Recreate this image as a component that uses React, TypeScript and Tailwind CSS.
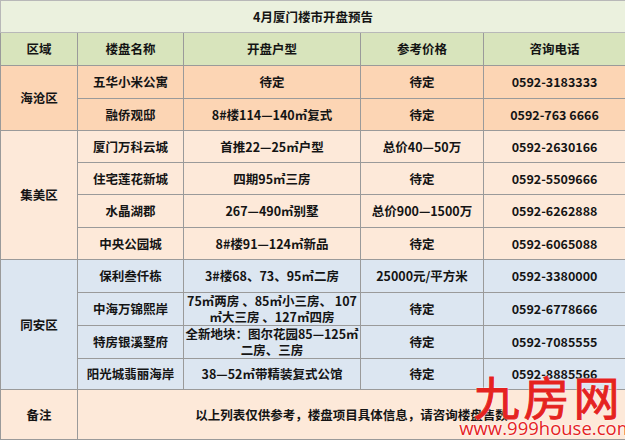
import React from "react";

type Row = {
  name: string;
  type: React.ReactNode;
  price: string;
  phone: string;
  h: string;
};

type Group = {
  area: string;
  bg: string;
  rows: Row[];
};

const groups: Group[] = [
  {
    area: "海沧区",
    bg: "bg-[#fcd5b4]",
    rows: [
      { name: "五华小米公寓", type: "待定", price: "待定", phone: "0592-3183333", h: "h-[33px]" },
      { name: "融侨观邸", type: "8#楼114—140㎡复式", price: "待定", phone: "0592-763 6666", h: "h-[32px]" },
    ],
  },
  {
    area: "集美区",
    bg: "bg-[#fde9d9]",
    rows: [
      { name: "厦门万科云城", type: "首推22—25㎡户型", price: "总价40—50万", phone: "0592-2630166", h: "h-[32px]" },
      { name: "住宅莲花新城", type: "四期95㎡三房", price: "待定", phone: "0592-5509666", h: "h-[32px]" },
      { name: "水晶湖郡", type: "267—490㎡别墅", price: "总价900—1500万", phone: "0592-6262888", h: "h-[33px]" },
      { name: "中央公园城", type: "8#楼91—124㎡新品", price: "待定", phone: "0592-6065088", h: "h-[32px]" },
    ],
  },
  {
    area: "同安区",
    bg: "bg-[#dce6f1]",
    rows: [
      { name: "保利叁仟栋", type: "3#楼68、73、95㎡二房", price: "25000元/平方米", phone: "0592-3380000", h: "h-[33px]" },
      {
        name: "中海万锦熙岸",
        type: (
          <>
            75㎡两房 、85㎡小三房、 107
            <br />
            ㎡大三房 、127㎡四房
          </>
        ),
        price: "待定",
        phone: "0592-6778666",
        h: "h-[32px]",
      },
      {
        name: "特房银溪墅府",
        type: (
          <>
            全新地块：图尔花园85—125㎡
            <br />
            二房、三房
          </>
        ),
        price: "待定",
        phone: "0592-7085555",
        h: "h-[33px]",
      },
      { name: "阳光城翡丽海岸", type: "38—52㎡带精装复式公馆", price: "待定", phone: "0592-8885566", h: "h-[31px]" },
    ],
  },
];

const cell = "border border-[#9a9a9a] text-center align-middle p-0";

export default function App() {
  return (
    <div
      className="relative w-[625px] h-[441px] overflow-hidden bg-white text-[#141414] font-bold text-[12.5px]"
      style={{ fontFamily: '"Noto Sans CJK SC", "Noto Sans", sans-serif' }}
    >
      <table className="w-[625px] table-fixed border-collapse leading-[16px]">
        <colgroup>
          <col className="w-[77px]" />
          <col className="w-[106px]" />
          <col className="w-[177px]" />
          <col className="w-[123px]" />
          <col className="w-[142px]" />
        </colgroup>
        <tbody>
          <tr className="h-[32px] bg-[#ebf1de]">
            <td colSpan={5} className={cell + " border-[#b8b8b8]"}>
              4月厦门楼市开盘预告
            </td>
          </tr>
          <tr className="h-[33px] bg-[#d8e4bc]">
            <td className={cell}>区域</td>
            <td className={cell}>楼盘名称</td>
            <td className={cell}>开盘户型</td>
            <td className={cell}>参考价格</td>
            <td className={cell}>咨询电话</td>
          </tr>
          {groups.map((g) =>
            g.rows.map((r, i) => (
              <tr key={g.area + i} className={r.h + " " + g.bg}>
                {i === 0 && (
                  <td rowSpan={g.rows.length} className={cell}>
                    {g.area}
                  </td>
                )}
                <td className={cell}>{r.name}</td>
                <td className={cell + " leading-[16px]"}>{r.type}</td>
                <td className={cell}>{r.price}</td>
                <td className={cell}>{r.phone}</td>
              </tr>
            ))
          )}
          <tr className="h-[50px] bg-[#fde9d9]">
            <td className={cell}>备注</td>
            <td colSpan={4} className={cell}>
              以上列表仅供参考，楼盘项目具体信息，请咨询楼盘售数
            </td>
          </tr>
        </tbody>
      </table>

      {/* watermark */}
      <div className="absolute left-[468px] top-[372px] w-[157px] flex flex-col items-center text-[#e5231f] font-normal">
        <div
          className="text-[46px] leading-[46px] tracking-[4px] pl-[4px]"
          style={{ WebkitTextStroke: "1px #e5231f", textShadow: "0 0 2px #fff, 0 0 2px #fff" }}
        >
          九房网
        </div>
        <div
          className="text-[18.5px] leading-[20px]"
          style={{ fontFamily: '"Open Sans", "Noto Sans", sans-serif', textShadow: "0 0 2px #fff, 0 0 2px #fff" }}
        >
          www.999house.com
        </div>
      </div>
    </div>
  );
}
